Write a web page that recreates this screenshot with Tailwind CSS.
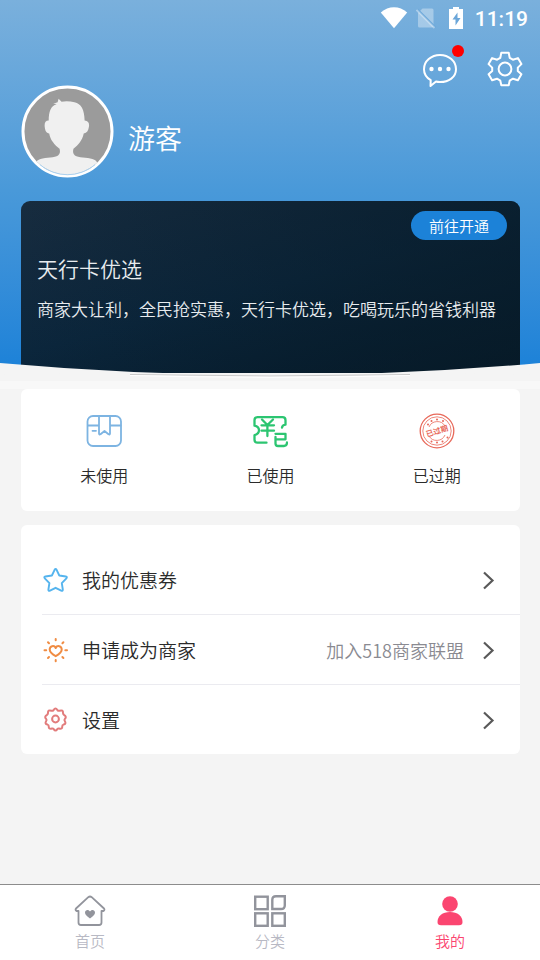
<!DOCTYPE html>
<html lang="zh-CN">
<head>
<meta charset="utf-8">
<meta name="viewport" content="width=device-width, initial-scale=1">
<title>我的</title>
<script src="https://cdn.jsdelivr.net/npm/@tailwindcss/browser@4"></script>
</head>
<body class="flex min-h-screen flex-col bg-[#f4f4f4] font-['Noto_Sans_CJK_SC',sans-serif] font-[350] text-[#2b2b2b]">

<header class="relative bg-linear-to-b from-[#7ab0dc] via-[#4999d9] to-[#1780d8] pr-5 pb-2 pl-[21px]">
  <div class="-mr-2 flex h-[38px] items-center justify-end">
    <svg class="mr-2 h-6 w-7" viewBox="0 0 28 24" fill="#fff" aria-hidden="true"><path d="M.8 5.600C8.500-1.400 19.500-1.400 27.200 5.600L14 21.300z"/></svg>
    <svg class="mr-3 h-6 w-5" viewBox="0 0 20 24" aria-hidden="true"><path d="M6.500 1.500H16a1.500 1.500 0 0 1 1.500 1.500v16a1.500 1.500 0 0 1-1.500 1.500H3.500A1.500 1.500 0 0 1 2 19V6z" fill="#fff" opacity=".35"/><path d="M1.500 2.500l18 18" stroke="#6ea9da" stroke-width="2"/><path d="M.5 3l18 18" stroke="#fff" stroke-opacity=".4" stroke-width="1.800"/></svg>
    <svg class="mr-[11px] h-6 w-4" viewBox="0 0 16 24" aria-hidden="true"><path d="M1 2h4V0h6v2h4v20H1z" fill="#fff"/><path d="M9.500 5.500 4.500 12.500h3v6l5-7.500h-3z" fill="#6ba6d9"/></svg>
    <span class="font-[Roboto,sans-serif] text-[21px] leading-6 font-medium text-white">11:19</span>
  </div>

  <div class="-mr-[3px] flex items-center justify-end gap-[27px] pt-[11px]">
    <button type="button" aria-label="消息" class="relative flex size-10 items-center justify-center">
      <svg class="size-10" viewBox="0 0 40 40" fill="none" stroke="#fff" stroke-width="2" stroke-linejoin="round"><path d="M10.700 31.200C6.300 28.500 4 24.500 4 20.200 4 12.200 11.200 6 20 6s16 6.200 16 14.200S28.800 33 20 33c-1.400 0-2.700-.1-4-.5L10.500 37z"/><g fill="#fff" stroke="none"><circle cx="11.500" cy="20" r="2.200"/><circle cx="20" cy="20" r="2.200"/><circle cx="28.500" cy="20" r="2.200"/></g></svg>
      <span class="absolute -top-1 -right-1 size-3 rounded-full bg-[#ff0000]"></span>
    </button>
    <button type="button" aria-label="设置" class="flex size-9 items-center justify-center">
      <svg class="size-9" viewBox="0 0 36 36" fill="none" stroke="#fff" stroke-width="2" stroke-linejoin="round"><path d="M14.300 1.800h7.400l1 5 3.200 1.900 5-1.600 3.500 6-3.600 3.500v3.300l3.600 3.300-3.500 6-4.900-1.500-3.300 2-1 4.500h-7.400l-1-4.500-3.300-2-4.900 1.500-3.500-6 3.600-3.300v-3.300l-3.600-3.500 3.500-6 5 1.600 3.200-1.900z"/><circle cx="18" cy="18" r="6.400"/></svg>
    </button>
  </div>

  <div class="-mt-1 flex items-center gap-3.5">
    <svg class="size-[93px]" viewBox="0 0 94 94" role="img" aria-label="头像">
      <defs><clipPath id="face"><circle cx="47" cy="47" r="43.500"/></clipPath></defs>
      <circle cx="47" cy="47" r="45" fill="#9b9b9b" stroke="#fff" stroke-width="3"/>
      <g clip-path="url(#face)"><path fill="#f0f0f0" d="M38 14l3 3c4-1 9-.6 13 .5 7 1.700 10 7 10.300 18.500 4 .3 5 3 4.300 6.500-.5 4-2 6-5.200 6.500-1.400 7-5.400 11.500-10.400 15.500-1 4 0 6 3 7.500 4 2 14 1 18 3.500 3 1.500 4 4 5 9v15H12v-15c1-5 3-7.500 6-9 4-2.500 14-1.500 18-3.500 3-1.500 4-3.500 3-7.500-5-4-9.500-9-10.500-15.500-3-.5-4-2.500-4.500-6.500-.5-4 .5-6.500 4-6.500 0-9 2-15 8-16.500-1-.5-2-.3-3.500-.5 1.700-.4 3-.8 4.500-1.500z"/></g>
      <path d="M19 80.500a43.500 43.500 0 0 0 56 0" fill="none" stroke="#a9d0f0"/>
    </svg>
    <h1 class="pt-3 text-[27px] leading-9 text-white">游客</h1>
  </div>

  <section class="relative mt-[23px] h-[172px] rounded-t-[9px] bg-linear-165 from-[#172c3f] via-[#0b263c] to-[#051a2a] px-4 pt-2.5 text-[#e8ecef]">
    <div class="absolute inset-0 rounded-t-[9px] bg-linear-to-r from-transparent to-[#081a26]/60"></div>
    <div class="relative -mr-1 flex justify-end pr-px"><a href="#open" class="rounded-full bg-[#1c82d8] px-[18px] text-[15px] leading-[29px] text-white">前往开通</a></div>
    <h2 class="relative mt-3 text-[21px] leading-8">天行卡优选</h2>
    <p class="relative mt-[13px] text-[17px] leading-6 whitespace-nowrap">商家大让利，全民抢实惠，天行卡优选，吃喝玩乐的省钱利器</p>
  </section>

  <svg class="absolute bottom-0 left-0 h-5 w-full" viewBox="0 0 540 20" preserveAspectRatio="none" aria-hidden="true">
    <path d="M0 2Q270 26 540 2V20H0z" fill="#f4f4f4"/>
    <path d="M110 12H430L540 14V20H0V14z" fill="#f4f4f4"/>
    <path d="M130 13.500Q270 16.500 410 13.500" fill="none" stroke="#c9c9c9"/>
    <path d="M130 14.500Q270 18 410 14.500" fill="none" stroke="#fff"/>
  </svg>
</header>

<main class="flex-1">
  <div class="h-2 bg-[#f8f8f8]"></div>
  <section class="mx-5 ml-[21px] grid grid-cols-3 rounded-md bg-white pt-6 pb-6 text-center text-base leading-6">
    <a href="#unused" class="flex flex-col items-center gap-3.5">
      <svg class="size-9" viewBox="0 0 36 36" fill="none" stroke="#7db4e2" stroke-width="1.800" stroke-linejoin="round" stroke-linecap="round"><rect x="1.500" y="3" width="33.500" height="30" rx="5.500"/><path d="M2 12.500h10.500M24 12.500h10.500M13 3v17.500q0 1.500 1.500.8L18.500 18l4 3.300q1.500.7 1.500-.8V3M6.500 17.800h3.500"/></svg>
      <span>未使用</span>
    </a>
    <a href="#used" class="flex flex-col items-center gap-3.5">
      <svg class="size-9" viewBox="0 0 36 36" fill="none" stroke="#2cc571" stroke-width="2.300" stroke-linejoin="round" stroke-linecap="round"><path d="M14.500 29.700H5.500q-3 0-3-3v-4.500c6-2 6-8 0-9.500V7.200q0-3 3-3h25q3 0 3 3v4.500q-3.200.3-3.500 3"/><path d="M10 6.500l5.400 5.500 5.600-5.500M9.500 12.300h12.500M9.500 17.700h12.500M15.400 12v11"/><path d="M23.500 20.800H33.500v5.500H23.500M23.500 24v6.500q0 2.500 2.500 2.500h6q3 0 3-3.500"/></svg>
      <span>已使用</span>
    </a>
    <a href="#expired" class="flex flex-col items-center gap-3.5">
      <svg class="size-9" viewBox="0 0 36 36" fill="none" stroke="#e8695a"><circle cx="18" cy="18" r="16.800" stroke-width="1.300"/><circle cx="18" cy="18" r="14.200" stroke-width=".8"/><path d="M10 14a9 9 0 0 1 16-1M10 23a9 9 0 0 0 16-1" stroke-width=".8"/><g stroke-width="2" stroke-linecap="round"><path d="M9 11.500h.01M12.500 8h.01M18 6.500h.01M24 8h.01M12.500 28.500h.01M18 29.500h.01M23.500 28.500h.01M28.500 24.500h.01"/></g><text x="18" y="20.800" transform="rotate(-17 18 18)" text-anchor="middle" font-size="7.500" font-weight="700" fill="#e8695a" stroke="none">已过期</text></svg>
      <span>已过期</span>
    </a>
  </section>

  <ul class="mx-5 mt-3.5 ml-[21px] rounded-md bg-white pt-5 pl-[21px] text-[19px] leading-7">
    <li class="border-b border-[#ebebf0]">
      <a href="#coupons" class="flex h-[69px] items-center pr-6">
        <svg class="mr-3 size-7" viewBox="0 0 28 28" fill="none" stroke="#55b4ee" stroke-width="1.900" stroke-linejoin="round"><path d="M12.600 3.800q1-1.600 2 0l2.700 5.700 6.500 1q1.800.4.600 1.800l-4.600 4.800 1 6.400q.1 1.900-1.600 1.200l-5.600-2.900-5.600 2.900q-1.700.7-1.600-1.200l1-6.400-4.600-4.800q-1.200-1.400.6-1.800l6.500-1z"/></svg>
        <span class="flex-1">我的优惠券</span>
        <svg class="h-5 w-4" viewBox="0 0 16 20" fill="none" stroke="#595959" stroke-width="2.200"><path d="M4 2.500l8.500 8-8.500 8"/></svg>
      </a>
    </li>
    <li class="border-b border-[#ebebf0]">
      <a href="#merchant" class="flex h-[69px] items-center pr-6">
        <svg class="mr-3 size-7" viewBox="0 0 28 28" fill="none" stroke="#f08c43" stroke-width="2" stroke-linejoin="round" stroke-linecap="round"><path d="M13.700 20.200c-4.500-2.500-6-4.300-6-6.700 0-3.800 4.600-4.500 6-1.500 1.400-3 6-2.300 6 1.500 0 2.400-1.500 4.200-6 6.700z"/><path d="M13.700 3v1.300M13.700 24v1.200M2.500 14.200h1.700M23.300 14.200H25M6 6.300l1 1M21.400 6.300l-1 1M6 22l1-1M21.400 22l-1-1"/></svg>
        <span class="flex-1">申请成为商家</span>
        <span class="mr-4 text-lg leading-7 text-[#8a8a91]">加入518商家联盟</span>
        <svg class="h-5 w-4" viewBox="0 0 16 20" fill="none" stroke="#595959" stroke-width="2.200"><path d="M4 2.500l8.500 8-8.500 8"/></svg>
      </a>
    </li>
    <li>
      <a href="#settings" class="flex h-[69px] items-center pr-6">
        <svg class="mr-3 size-7" viewBox="0 0 28 28" fill="none" stroke="#e27c7c" stroke-width="2" stroke-linejoin="round"><path d="M11.500 4.200q2-3.200 4 0 .8.800 2 .5 3.800-1.200 3.500 2.300 0 1.200 1 1.900 3.200 1.800.8 4.100-.8 1 0 2 1.800 2.900-1.300 3.600-1.300.4-1.200 1.600.1 3.500-3.300 2.300-1.100-.2-1.700.6-1.800 2.800-3.600 0-.6-.8-1.700-.6-3.400 1.200-3.300-2.300.1-1.200-1.200-1.600-3.100-.7-1.300-3.600.8-1 0-2-2.400-2.300.8-4.100 1-.7 1-1.900Q5.700 3.500 9.500 4.700q1.200.3 2-.5z"/><circle cx="13.500" cy="13" r="3.400"/></svg>
        <span class="flex-1">设置</span>
        <svg class="h-5 w-4" viewBox="0 0 16 20" fill="none" stroke="#595959" stroke-width="2.200"><path d="M4 2.500l8.500 8-8.500 8"/></svg>
      </a>
    </li>
  </ul>
</main>

<nav class="grid h-[76px] grid-cols-3 border-t border-[#8c8c8c] bg-white pt-2.5 text-center text-[15px] leading-6 text-[#b8b9c4]">
  <a href="#home" class="flex flex-col items-center gap-0.5">
    <svg class="size-8" viewBox="0 0 32 32" fill="none" stroke="#92949c" stroke-width="1.800" stroke-linejoin="round"><path d="M14.300 2.200q1.700-1.400 3.400 0L30 13.500q1 1.500-.5 2.500H27.500v11.500q0 2.500-2.500 2.500H7q-2.500 0-2.500-2.500V16H2.500q-1.500-1-.5-2.500z"/><path d="M16 23.500c-3.500-2.400-5-3.900-5-5.900 0-3.100 3.800-3.500 5-1 1.200-2.500 5-2.100 5 1 0 2-1.500 3.500-5 5.900z" fill="#92949c" stroke="none"/></svg>
    <span>首页</span>
  </a>
  <a href="#category" class="flex flex-col items-center gap-0.5">
    <svg class="size-8" viewBox="0 0 32 32" fill="none" stroke="#92949c" stroke-width="2.400"><rect x="1.200" y="1.700" width="12.500" height="12.500"/><path d="M22 1.200h8.800v9q0 3.800-3.800 3.800h-8.700V5q0-3.800 3.700-3.800z"/><rect x="1.200" y="18.300" width="12.500" height="12.500"/><rect x="18.300" y="18.300" width="12.500" height="12.500"/></svg>
    <span>分类</span>
  </a>
  <a href="#me" aria-current="page" class="flex flex-col items-center gap-0.5 text-[#fb4570]">
    <svg class="size-8" viewBox="0 0 32 32" fill="#fb4570"><circle cx="16" cy="9" r="7.800"/><path d="M3.500 27c0-6 5-10 12.500-10s12.500 4 12.500 10q0 3.300-3.500 3.300H7Q3.500 30.300 3.500 27z"/></svg>
    <span>我的</span>
  </a>
</nav>
</body>
</html>
